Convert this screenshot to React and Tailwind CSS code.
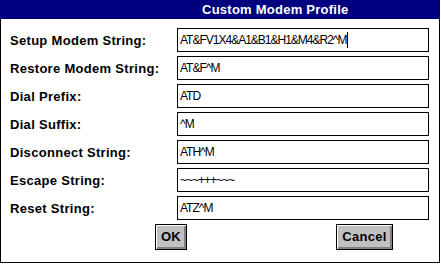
import React from "react";

const rows = [
  ["Setup Modem String:", "AT&FV1X4&A1&B1&H1&M4&R2^M", true],
  ["Restore Modem String:", "AT&F^M"],
  ["Dial Prefix:", "ATD"],
  ["Dial Suffix:", "^M"],
  ["Disconnect String:", "ATH^M"],
  ["Escape String:", "~~~+++~~~"],
  ["Reset String:", "ATZ^M"],
];

const bold = { fontFamily: '"Liberation Sans", Arial, sans-serif' };

export default function App() {
  return (
    <div className="w-[441px] h-[264px] bg-white" style={bold}>
      <div className="w-[440px]">
        <div className="h-[19px] bg-[#000080] text-white font-bold text-[13px] tracking-[0.25px] leading-[19px] pl-[202px]">
          Custom Modem Profile
        </div>
        <div className="h-[244px] border-l border-r border-b border-black bg-white pt-[9px] pl-[9px]">
          <div className="flex flex-col gap-[4px]">
            {rows.map(([label, value, cursor]) => (
              <div key={label} className="flex items-center h-[24px]">
                <div className="w-[167px] font-bold text-[13px] tracking-[0.3px] text-black leading-none">
                  {label}
                </div>
                <div className="w-[252px] h-[24px] border border-black flex items-center pl-[2px] text-[12px] tracking-[-1px] text-black leading-none">
                  <span>{value}</span>
                  {cursor && <span className="w-[1px] h-[16px] bg-black ml-[1px]" />}
                </div>
              </div>
            ))}
          </div>
          <div className="flex mt-[4px] pl-[145px] gap-[149px]">
            <div className="w-[32px] h-[26px] border border-black bg-[#c0c0c0] shadow-[inset_1px_1px_0_#ffffff,inset_-2px_-2px_0_#808080] flex items-center justify-center font-bold text-[13px] tracking-[0.3px] text-black">
              OK
            </div>
            <div className="w-[57px] h-[26px] border border-black bg-[#c0c0c0] shadow-[inset_1px_1px_0_#ffffff,inset_-2px_-2px_0_#808080] flex items-center justify-center font-bold text-[13px] tracking-[0.3px] text-black">
              Cancel
            </div>
          </div>
        </div>
      </div>
    </div>
  );
}
